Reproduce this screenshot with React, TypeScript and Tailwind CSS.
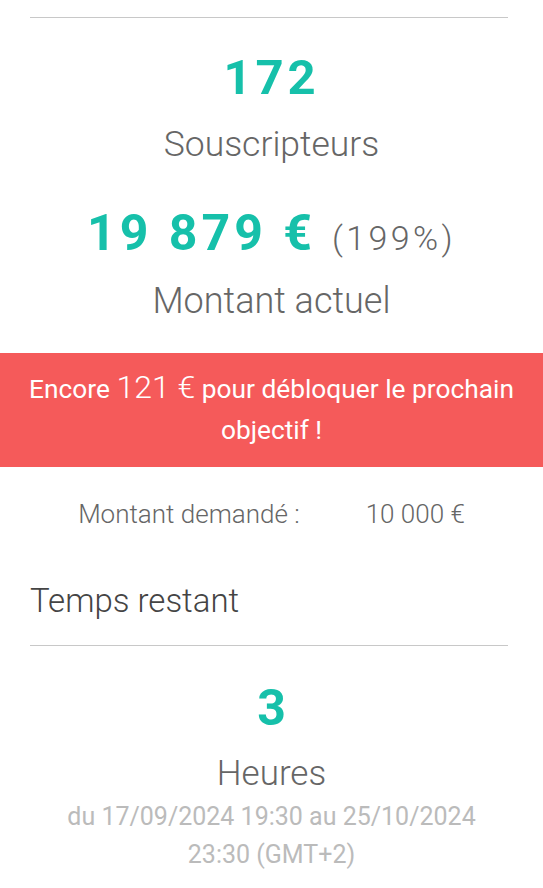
import React from "react";

export default function App() {
  return (
    <div className="w-[543px] bg-white font-['Roboto',sans-serif] text-[#666]">
      <div className="pl-[30px] pr-[35px] pt-[17px]">
        <div className="border-t border-[#c8c8c8]" />
      </div>
      <div className="flex flex-col items-center pt-[30px]">
        <div className="text-[49px] leading-[60px] font-bold tracking-[0.08em] text-[#16c0aa]">172</div>
        <div className="mt-[16px] text-[35.5px] leading-[40px] font-light">Souscripteurs</div>
        <div className="mt-[39px] flex items-baseline leading-[60px]">
          <span className="text-[50px] font-bold tracking-[0.08em] text-[#16c0aa]">19 879 €</span>
          <span className="ml-[16px] text-[34px] font-light tracking-[0.1em]">(199%)</span>
        </div>
        <div className="mt-[13px] text-[36px] leading-[40px] font-light">Montant actuel</div>
      </div>
      <div className="mt-[32px] bg-[#f55a5a] px-[15px] py-[16px] text-center text-[26.3px] leading-[41px] text-white">
        Encore <span className="text-[32px] leading-[30px] font-light">121 €</span> pour débloquer le prochain objectif !
      </div>
      <div className="flex justify-center gap-[66px] pt-[32px] text-[26px] leading-[30px] font-light">
        <span>Montant demandé :</span>
        <span>10 000 €</span>
      </div>
      <div className="pl-[30px] pr-[35px] pt-[52px]">
        <div className="text-[33px] leading-[40px] font-light text-[#444]">Temps restant</div>
        <div className="mt-[24px] border-t border-[#c8c8c8]" />
      </div>
      <div className="flex flex-col items-center pt-[32px]">
        <div className="text-[50px] leading-[60px] font-bold text-[#16c0aa]">3</div>
        <div className="mt-[16px] text-[35px] leading-[40px] font-light">Heures</div>
        <div className="mt-[4px] w-[440px] text-center text-[25px] leading-[38px] text-[#bbb]">
          du 17/09/2024 19:30 au 25/10/2024 23:30 (GMT+2)
        </div>
      </div>
    </div>
  );
}
